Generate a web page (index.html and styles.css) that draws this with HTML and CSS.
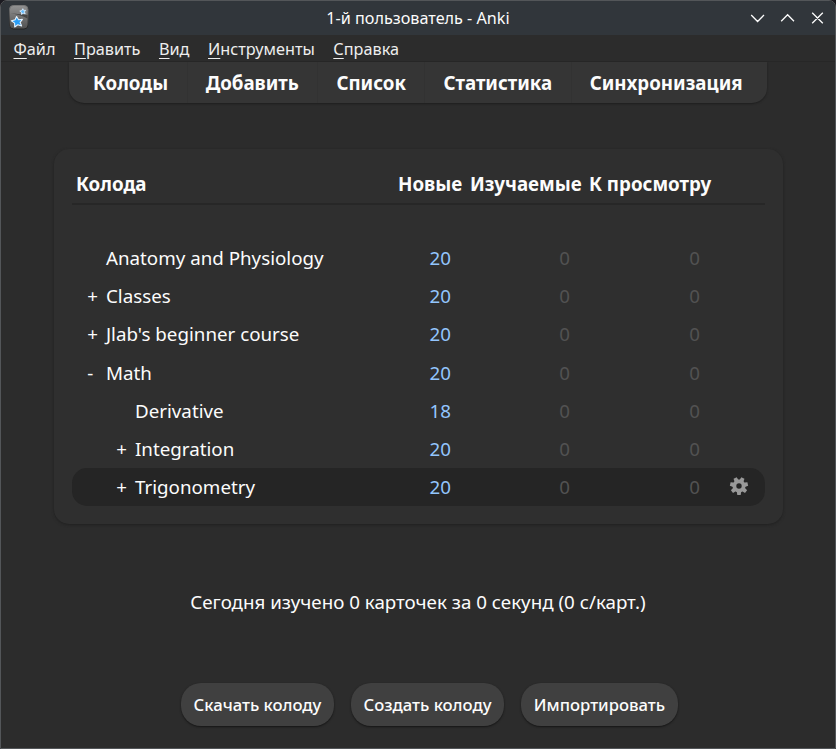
FILE: index.html
```html
<!DOCTYPE html>
<html lang="ru">
<head>
<meta charset="utf-8">
<title>1-й пользователь - Anki</title>
<link rel="stylesheet" href="styles.css">
</head>
<body>
<div class="window">
  <header class="titlebar">
    <svg class="logo" width="20" height="25" viewBox="0 0 20 25">
      <defs>
        <linearGradient id="g" x1="0" y1="0" x2="0" y2="1"><stop offset="0" stop-color="#929292"/><stop offset="1" stop-color="#505050"/></linearGradient>
        <linearGradient id="b" x1="0" y1="0" x2="0" y2="1"><stop offset="0" stop-color="#777"/><stop offset="1" stop-color="#222"/></linearGradient>
      </defs>
      <rect x="0.5" y="0.5" width="18.5" height="23.5" rx="4" fill="url(#g)" stroke="url(#b)"/>
      <path d="M1 8.500Q10 9 18.500 13.500L18.500 10Q12 9 1 8.500Z" fill="#353535" opacity=".75"/>
      <path d="M7.600 11.500l2 3.200 3.800-.4-2.300 3 1.500 3.600-3.800-1.200-3.100 2.300-.1-3.900-3.200-2.200 3.700-1.100z" fill="#299df5" stroke="#e5f3ff" stroke-width="1.100" stroke-linejoin="round"/>
      <path d="M13.800 3.700l.8 1.700 2-.1-1.200 1.600.8 1.900-2-.6-1.700 1.200v-2.100l-1.700-1.200 2-.6z" fill="#63bafa" stroke="#d9edff" stroke-width=".9" stroke-linejoin="round"/>
    </svg>
    <div class="title">1-й пользователь - Anki</div>
    <svg class="controls" width="76" height="16" viewBox="0 0 76 16">
      <path d="M1.200 5l6.400 6.500L14 5M31.200 11.300l6.400-6.500 6.400 6.500M62.200 2.700l10.600 10.600M72.800 2.700L62.200 13.300"/>
    </svg>
  </header>
  <nav class="menu">
    <span><u>Ф</u>айл</span><span><u>П</u>равить</span><span><u>В</u>ид</span><span><u>И</u>нструменты</span><span><u>С</u>правка</span>
  </nav>
  <nav class="toolbar">
    <a>Колоды</a><a>Добавить</a><a>Список</a><a>Статистика</a><a>Синхронизация</a>
  </nav>
  <main class="card">
    <div class="head"><span>Колода</span><span>Новые</span><span>Изучаемые</span><span>К просмотру</span></div>
    <div class="row"><span class="sign"></span><span class="name">Anatomy and Physiology</span><span class="new">20</span><span class="zero">0</span><span class="zero">0</span><span></span></div>
    <div class="row"><span class="sign">+</span><span class="name">Classes</span><span class="new">20</span><span class="zero">0</span><span class="zero">0</span><span></span></div>
    <div class="row"><span class="sign">+</span><span class="name">Jlab's beginner course</span><span class="new">20</span><span class="zero">0</span><span class="zero">0</span><span></span></div>
    <div class="row"><span class="sign">-</span><span class="name">Math</span><span class="new">20</span><span class="zero">0</span><span class="zero">0</span><span></span></div>
    <div class="row child"><span class="sign"></span><span class="name">Derivative</span><span class="new">18</span><span class="zero">0</span><span class="zero">0</span><span></span></div>
    <div class="row child"><span class="sign">+</span><span class="name">Integration</span><span class="new">20</span><span class="zero">0</span><span class="zero">0</span><span></span></div>
    <div class="row child active"><span class="sign">+</span><span class="name">Trigonometry</span><span class="new">20</span><span class="zero">0</span><span class="zero">0</span>
      <svg class="gear" width="20" height="20" viewBox="-10 -10 20 20">
        <defs><path id="t" d="M-2.400 4L-1.700 9H1.700L2.400 4Z"/></defs>
        <circle r="4.600" fill="none" stroke="#999" stroke-width="3.800"/>
        <g fill="#999"><use href="#t"/><use href="#t" transform="rotate(51.430)"/><use href="#t" transform="rotate(102.860)"/><use href="#t" transform="rotate(154.290)"/><use href="#t" transform="rotate(205.710)"/><use href="#t" transform="rotate(257.140)"/><use href="#t" transform="rotate(308.570)"/></g>
      </svg>
    </div>
  </main>
  <p class="studied">Сегодня изучено 0 карточек за 0 секунд (0 с/карт.)</p>
  <footer class="actions"><button>Скачать колоду</button><button>Создать колоду</button><button>Импортировать</button></footer>
</div>
</body>
</html>
```
FILE: styles.css
```css
* { box-sizing: border-box; }
body { margin: 0; background: #1b1a20; font-family: "Noto Sans", sans-serif; color: #fcfcfc; }
.window { width: 836px; height: 749px; background: #2c2c2c; border: 1px solid #535659; border-radius: 7px 7px 0 0; overflow: hidden; }
.titlebar { height: 34px; background: #31363b; display: grid; grid-template-columns: 100px 1fr 100px; align-items: center; }
.logo { margin-left: 8px; margin-top: -2px; }
.title { text-align: center; font-size: 16.200px; line-height: 34px; white-space: nowrap; }
.controls { justify-self: end; margin-right: 9px; fill: none; stroke: #fcfcfc; stroke-width: 1.300; }
.menu { height: 27px; padding-left: 12.500px; display: flex; gap: 18.500px; font-size: 16.250px; line-height: 28px; border-bottom: 1px solid #272727; color: #eee; }
.menu u { text-decoration-thickness: 1px; text-underline-offset: 3px; }
.toolbar { width: 698px; height: 41px; margin-left: 68px; background: #353535; border-radius: 0 0 15px 15px; display: flex; box-shadow: 0 1px 2px #1e1e1e; font-size: 18.720px; font-weight: 700; line-height: 42px; }
.toolbar a { padding: 0 18.500px 0 18px; border-right: 1px solid #323232; white-space: nowrap; }
.toolbar a:first-child { padding-left: 24px; }
.toolbar a:last-child { border: 0; }
.card { width: 729px; height: 375px; margin: 46px 0 0 52.500px; padding: 18px 18px 0 18.500px; background: #2f2f2f; border-radius: 15px; box-shadow: 0 1px 3px #202020; }
.head { height: 38px; padding-left: 4px; margin-bottom: 34px; display: grid; grid-template-columns: 322px 72px 119px 1fr; border-bottom: 2px solid #272727; font-size: 18.750px; font-weight: 700; line-height: 34px; white-space: nowrap; }
.row { height: 38.180px; display: grid; grid-template-columns: 34px 323.500px 22px 118.500px 130px 1fr; align-items: center; font-size: 18.750px; line-height: 38px; white-space: nowrap; }
.sign { padding-left: 15.300px; }
.child { grid-template-columns: 63px 294.500px 22px 118.500px 130px 1fr; }
.child .sign { padding-left: 44.300px; }
.new { color: #93c5fd; }
.zero { text-align: right; color: #525252; }
.active { background: #252525; border-radius: 15px; }
.gear { margin: -3px 0 0 29px; }
.studied { margin: 65px 0 0; text-align: center; font-size: 18.750px; line-height: 26px; }
.actions { display: flex; gap: 17px; margin: 68px 0 0 180px; }
button { height: 43px; width: 153px; padding: 0 0 1px; border: 0; border-radius: 20px; background: #404040; color: #fcfcfc; font: 500 16.670px "Noto Sans", sans-serif; box-shadow: 0 1px 2px #151515; white-space: nowrap; }
button:last-child { width: 157px; }
```
